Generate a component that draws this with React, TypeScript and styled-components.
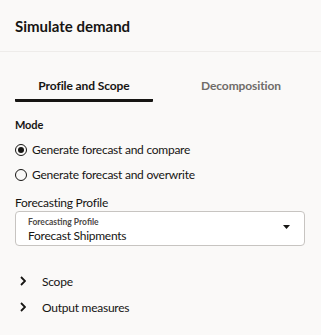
import React, { useState } from "react";
import styled, { createGlobalStyle } from "styled-components";

const GlobalStyle = createGlobalStyle`
  html, body {
    margin: 0;
    padding: 0;
    background: #faf9f8;
  }
  body {
    font-family: Lato, "Noto Sans", sans-serif;
    color: #161513;
  }
`;

const Panel = styled.div`
  width: 321px;
  height: 335px;
  background: #faf9f8;
  overflow: hidden;
`;

const Header = styled.div`
  height: 52px;
  box-sizing: border-box;
  padding: 0 15px;
  display: flex;
  align-items: center;
  border-bottom: 1px solid #eeecea;
`;

const Title = styled.h1`
  margin: 0;
  font-size: 15px;
  font-weight: 700;
`;

const Tabs = styled.div`
  display: flex;
  padding: 0 15px;
  margin-top: 20px;
`;

const Tab = styled.button<{ $active?: boolean }>`
  flex: 0 0 ${(p) => (p.$active ? "138px" : "176px")};
  height: 30px;
  display: flex;
  align-items: center;
  justify-content: center;
  background: none;
  border: none;
  border-bottom: 3px solid ${(p) => (p.$active ? "#161513" : "transparent")};
  border-radius: 1px;
  padding: 0;
  font-family: inherit;
  font-size: 12px;
  letter-spacing: -0.1px;
  font-weight: 700;
  color: ${(p) => (p.$active ? "#161513" : "#6f6c69")};
  cursor: pointer;
`;

const Body = styled.div`
  padding: 15px 15px 0;
  font-size: 12px;
  letter-spacing: -0.25px;
`;

const SectionLabel = styled.div`
  font-size: 11px;
  font-weight: 700;
  letter-spacing: -0.1px;
  line-height: 16px;
  margin-bottom: 4px;
`;

const RadioRow = styled.label`
  display: flex;
  align-items: center;
  gap: 5px;
  height: 25px;
  cursor: pointer;
`;

const RadioCircle = styled.span<{ $checked?: boolean }>`
  width: 12px;
  height: 12px;
  border: 1.3px solid #161513;
  border-radius: 50%;
  display: flex;
  align-items: center;
  justify-content: center;
  box-sizing: border-box;
  &::after {
    content: "";
    width: 6px;
    height: 6px;
    border-radius: 50%;
    background: ${(p) => (p.$checked ? "#161513" : "transparent")};
  }
`;

const FieldLabel = styled.div`
  font-size: 12px;
  line-height: 16px;
  margin-top: 8px;
  margin-bottom: 0;
`;

const SelectBox = styled.div`
  height: 35px;
  box-sizing: border-box;
  width: 290px;
  background: #ffffff;
  border: 1px solid #c7c4c1;
  border-radius: 4px;
  padding: 3px 14px 0 12px;
  display: flex;
  align-items: center;
  justify-content: space-between;
`;

const SelectText = styled.div`
  display: flex;
  flex-direction: column;
`;

const InnerLabel = styled.span`
  font-size: 8.5px;
  letter-spacing: 0;
  line-height: 11px;
  color: #4d4a47;
  font-weight: 700;
`;

const Value = styled.span`
  line-height: 16px;
`;

const Accordions = styled.div`
  margin-top: 22px;
`;

const AccordionRow = styled.div`
  display: flex;
  align-items: center;
  height: 26px;
`;

const Chevron = styled.span`
  width: 27px;
  display: flex;
  align-items: center;
  padding-left: 5px;
  box-sizing: border-box;
`;

export default function App() {
  const [mode, setMode] = useState("compare");
  return (
    <>
      <GlobalStyle />
      <Panel>
        <Header>
          <Title>Simulate demand</Title>
        </Header>
        <Tabs>
          <Tab $active>Profile and Scope</Tab>
          <Tab>Decomposition</Tab>
        </Tabs>
        <Body>
          <SectionLabel>Mode</SectionLabel>
          <RadioRow onClick={() => setMode("compare")}>
            <RadioCircle $checked={mode === "compare"} />
            Generate forecast and compare
          </RadioRow>
          <RadioRow onClick={() => setMode("overwrite")}>
            <RadioCircle $checked={mode === "overwrite"} />
            Generate forecast and overwrite
          </RadioRow>
          <FieldLabel>Forecasting Profile</FieldLabel>
          <SelectBox>
            <SelectText>
              <InnerLabel>Forecasting Profile</InnerLabel>
              <Value>Forecast Shipments</Value>
            </SelectText>
            <svg width="7" height="4" viewBox="0 0 7 4" style={{ marginBottom: 6 }}>
              <path d="M0 0 H7 L3.5 4 Z" fill="#161513" />
            </svg>
          </SelectBox>
          <Accordions>
            {["Scope", "Output measures"].map((t) => (
              <AccordionRow key={t}>
                <Chevron>
                  <svg width="6" height="10" viewBox="0 0 6 10">
                    <path d="M1 1 L5 5 L1 9" fill="none" stroke="#161513" strokeWidth="1.8" />
                  </svg>
                </Chevron>
                {t}
              </AccordionRow>
            ))}
          </Accordions>
        </Body>
      </Panel>
    </>
  );
}
